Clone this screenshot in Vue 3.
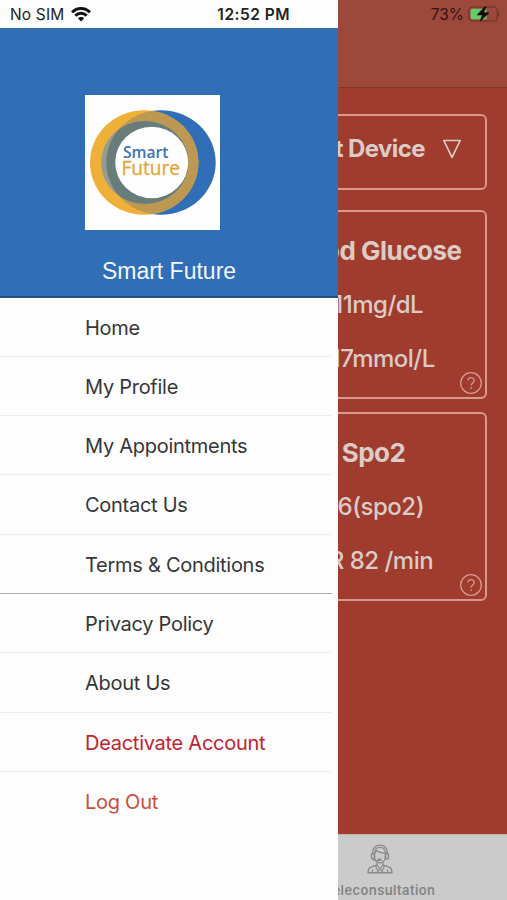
<script setup>
const menu = [
  { label: 'Home' },
  { label: 'My Profile' },
  { label: 'My Appointments' },
  { label: 'Contact Us' },
  { label: 'Terms & Conditions', strong: true },
  { label: 'Privacy Policy' },
  { label: 'About Us' },
  { label: 'Deactivate Account', tone: 'danger' },
  { label: 'Log Out', tone: 'logout' },
]
const cards = [
  { title: 'Blood Glucose', lines: ['111mg/dL', '6.17mmol/L'] },
  { title: 'Spo2', lines: ['96(spo2)', 'PR 82 /min'] },
]
</script>

<template>
  <div class="phone">
    <div class="app">
      <header class="appbar">
        <span class="percent">73%</span>
        <svg class="battery" width="32" height="16" viewBox="0 0 32 16">
          <rect x=".8" y="1" width="28.4" height="14" rx="3.5" fill="none" stroke="#703026" stroke-width="1.1" />
          <path d="M4.500 2.800h14v10.400h-14a2 2 0 0 1-2-2V4.800a2 2 0 0 1 2-2z" fill="#64cc69" />
          <path d="M30.300 5.500c1.400.5 1.400 4.500 0 5z" fill="#703026" />
          <path d="M16.800 .8L9 9h5.200l-2 6.300L21 6.700h-5.300l2.500-5.900z" fill="#120806" stroke="#120806" stroke-width=".5" />
        </svg>
      </header>
      <main class="content">
        <div class="select">
          <span>Select Device</span>
          <svg width="20" height="20" viewBox="0 0 20 20">
            <path d="M1.800 1.500H18.200L10 18.300z" fill="none" stroke="#dccbc7" stroke-width="1.700" stroke-linejoin="round" />
          </svg>
        </div>
        <section v-for="c in cards" :key="c.title" class="card">
          <h2>{{ c.title }}</h2>
          <p v-for="l in c.lines" :key="l">{{ l }}</p>
          <svg class="help" width="24" height="24" viewBox="0 0 24 24" fill="none" stroke="#d6988a" stroke-width="1.300">
            <circle cx="12" cy="12" r="10.300" />
            <path d="M9 9.600c0-4 6.200-4 6.200-.2 0 2.500-3.100 2.500-3.100 5.200" />
            <path d="M12.100 16.300v1.700" />
          </svg>
        </section>
      </main>
      <nav class="tabs">
        <div class="tab">
          <svg width="26" height="30" viewBox="0 0 26 30" fill="none" stroke="#8a8a8a" stroke-width="1.400" stroke-linejoin="round">
            <path d="M5.500 10V9c0-10.500 15-10.500 15 0v1" />
            <path d="M7.500 12V9c0-7.500 11-7.500 11 0v3c0 9-11 9-11 0z" />
            <path d="M7.500 9.500c1-1 1.500-2 2-3 2.500 2 5.500 2.500 9 2.500" />
            <rect x="4.500" y="9.500" width="3" height="5.500" rx="1.300" />
            <rect x="18.500" y="9.500" width="3" height="5.500" rx="1.300" />
            <path d="M6 15c1 2 3 2 5 1.500" />
            <path d="M10.500 15.700h4" stroke-width="2.400" />
            <path d="M10 18.500v2.700l-6 2C1.700 24 1 26 1 28.800h24c0-2.800-.7-4.800-3-5.600l-6-2v-2.700" />
            <path d="M10 21l3 4 3-4M8.500 21.800l2.500 6 2-3 2 3 2.500-6M5.500 25.500v3M20.500 25.500v3" stroke-width="1.100" />
          </svg>
          <span>Teleconsultation</span>
        </div>
      </nav>
    </div>

    <aside class="drawer">
      <div class="status">
        <span class="carrier">No SIM</span>
        <svg class="wifi" width="20" height="15" viewBox="0 0 20 15" fill="none" stroke="#111" stroke-width="2.800">
          <path d="M1 5.300C6 .2 14 .2 19 5.300" />
          <path d="M4.300 8.700c3.200-3.300 8.200-3.300 11.400 0" />
          <path d="M6.900 11.400c1.700-1.800 4.500-1.800 6.200 0L10 14.500z" fill="#111" stroke="none" />
        </svg>
        <span class="time">12:52 PM</span>
      </div>
      <div class="profile">
        <svg class="logo" width="135" height="135" viewBox="0 0 135 135">
          <defs>
            <clipPath id="blueDisc"><ellipse cx="76" cy="67.500" rx="54.700" ry="52.300" /></clipPath>
          </defs>
          <rect width="135" height="135" fill="#fdfefd" />
          <ellipse cx="76" cy="67.500" rx="54.700" ry="52.300" fill="#306eb8" />
          <ellipse cx="59.200" cy="67.500" rx="54.200" ry="52.300" fill="#efb039" />
          <ellipse cx="59.200" cy="67.500" rx="54.200" ry="52.300" fill="#bd9850" clip-path="url(#blueDisc)" />
          <ellipse cx="59.800" cy="67.500" rx="43.700" ry="41.500" fill="#969c90" />
          <ellipse cx="59.800" cy="67.500" rx="43.700" ry="41.500" fill="#687c79" clip-path="url(#blueDisc)" />
          <ellipse cx="66.700" cy="67.500" rx="36.500" ry="35.700" fill="#fdfefd" />
          <text class="word" x="38" y="63" textLength="45.500" lengthAdjust="spacingAndGlyphs" fill="#3b73b8" font-size="15.500" font-weight="600">Smart</text>
          <text class="word" x="36.500" y="80.300" textLength="58.500" lengthAdjust="spacingAndGlyphs" fill="#e5a63a" stroke="#e5a63a" stroke-width=".3" font-size="19.500" font-weight="500">Future</text>
        </svg>
        <div class="name">Smart Future</div>
      </div>
      <ul class="menu">
        <li v-for="m in menu" :key="m.label" :class="[m.tone, { strong: m.strong }]">{{ m.label }}</li>
      </ul>
    </aside>
  </div>
</template>

<style>
body {
  margin: 0;
}
</style>

<style scoped>
.phone {
  position: relative;
  width: 507px;
  height: 900px;
  overflow: hidden;
  font-family: Inter, "Liberation Sans", sans-serif;
}
.app {
  display: flex;
  flex-direction: column;
  height: 900px;
  background: #9f3c2e;
}
.appbar {
  box-sizing: border-box;
  height: 88px;
  flex: none;
  display: flex;
  justify-content: flex-end;
  align-items: flex-start;
  padding: 6px 7px 0 0;
  background: #9c483b;
  border-bottom: 1px solid #80382e;
}
.percent {
  font-size: 15.5px;
  line-height: 18px;
  color: #35130e;
  margin-right: 4px;
}
.content {
  flex: 1;
  display: flex;
  flex-direction: column;
  align-items: flex-end;
  padding: 26px 20px 0;
}
.select {
  box-sizing: border-box;
  width: 467px;
  height: 76px;
  display: flex;
  justify-content: flex-end;
  align-items: center;
  gap: 18px;
  padding: 0 23px 7px 0;
  margin-bottom: 20px;
  border: 2px solid #d69a8c;
  border-radius: 6px;
  color: #dccbc7;
  font-size: 24px;
  font-weight: 700;
  letter-spacing: -0.6px;
}
.select svg {
  margin-left: -1px;
}
.card {
  position: relative;
  box-sizing: border-box;
  width: 227px;
  height: 189px;
  margin-bottom: 13px;
  padding-top: 12px;
  border: 2px solid #d69a8c;
  border-radius: 6px;
  text-align: center;
  color: #dccbc7;
}
.card h2 {
  margin: 0;
  font-size: 26px;
  line-height: 54px;
  font-weight: 700;
  letter-spacing: -0.5px;
}
.card p {
  margin: 0;
  font-size: 24px;
  line-height: 54px;
  font-weight: 500;
  letter-spacing: -0.5px;
}
.help {
  position: absolute;
  right: 2.5px;
  bottom: 2.5px;
}
.tabs {
  height: 66px;
  flex: none;
  box-sizing: border-box;
  background: #cbcbcb;
  border-top: 1px solid #c2b0ad;
  display: flex;
  justify-content: flex-end;
}
.tab {
  width: 254px;
  display: flex;
  flex-direction: column;
  align-items: center;
  padding-top: 9px;
  color: #858585;
  font-size: 13px;
  font-weight: 600;
  letter-spacing: 0.4px;
}
.tab span {
  margin-top: 8px;
  line-height: 16px;
}
.drawer {
  position: absolute;
  left: 0;
  top: 0;
  width: 338px;
  height: 900px;
  background: #fdfdfd;
}
.status {
  height: 28px;
  display: flex;
  align-items: flex-start;
  padding: 6px 0 0 10px;
  box-sizing: border-box;
  line-height: 18px;
  font-size: 15.5px;
  color: #222;
}
.carrier {
  letter-spacing: 0.15px;
}
.wifi {
  margin: 1px 0 0 7px;
}
.time {
  margin-left: 126px;
  font-weight: 600;
  letter-spacing: 0.5px;
}
.profile {
  box-sizing: border-box;
  height: 269.5px;
  background: #306eb6;
  border-bottom: 2px solid #274f7c;
  display: flex;
  flex-direction: column;
  align-items: center;
  padding: 67px 34px 0 0;
}
.logo {
  flex: none;
}
.word {
  font-family: "Open Sans", sans-serif;
}
.name {
  margin: 27px 0 0 34px;
  font-family: "Liberation Sans", sans-serif;
  font-size: 23px;
  line-height: 28px;
  color: #f2f8ff;
}
.menu {
  margin: 0;
  padding: 0;
  list-style: none;
  width: 332px;
}
.menu li {
  box-sizing: border-box;
  height: 59.3px;
  padding: 1px 0 0 85px;
  line-height: 59px;
  border-bottom: 1px solid #eeeeee;
  font-size: 20px;
  letter-spacing: -0.27px;
  color: #353638;
}
.menu li.strong {
  border-bottom: 1px solid #a6aaa9;
}
.menu li.danger {
  color: #c3222f;
}
.menu li.logout {
  color: #c6503f;
  border-bottom: none;
}
</style>
